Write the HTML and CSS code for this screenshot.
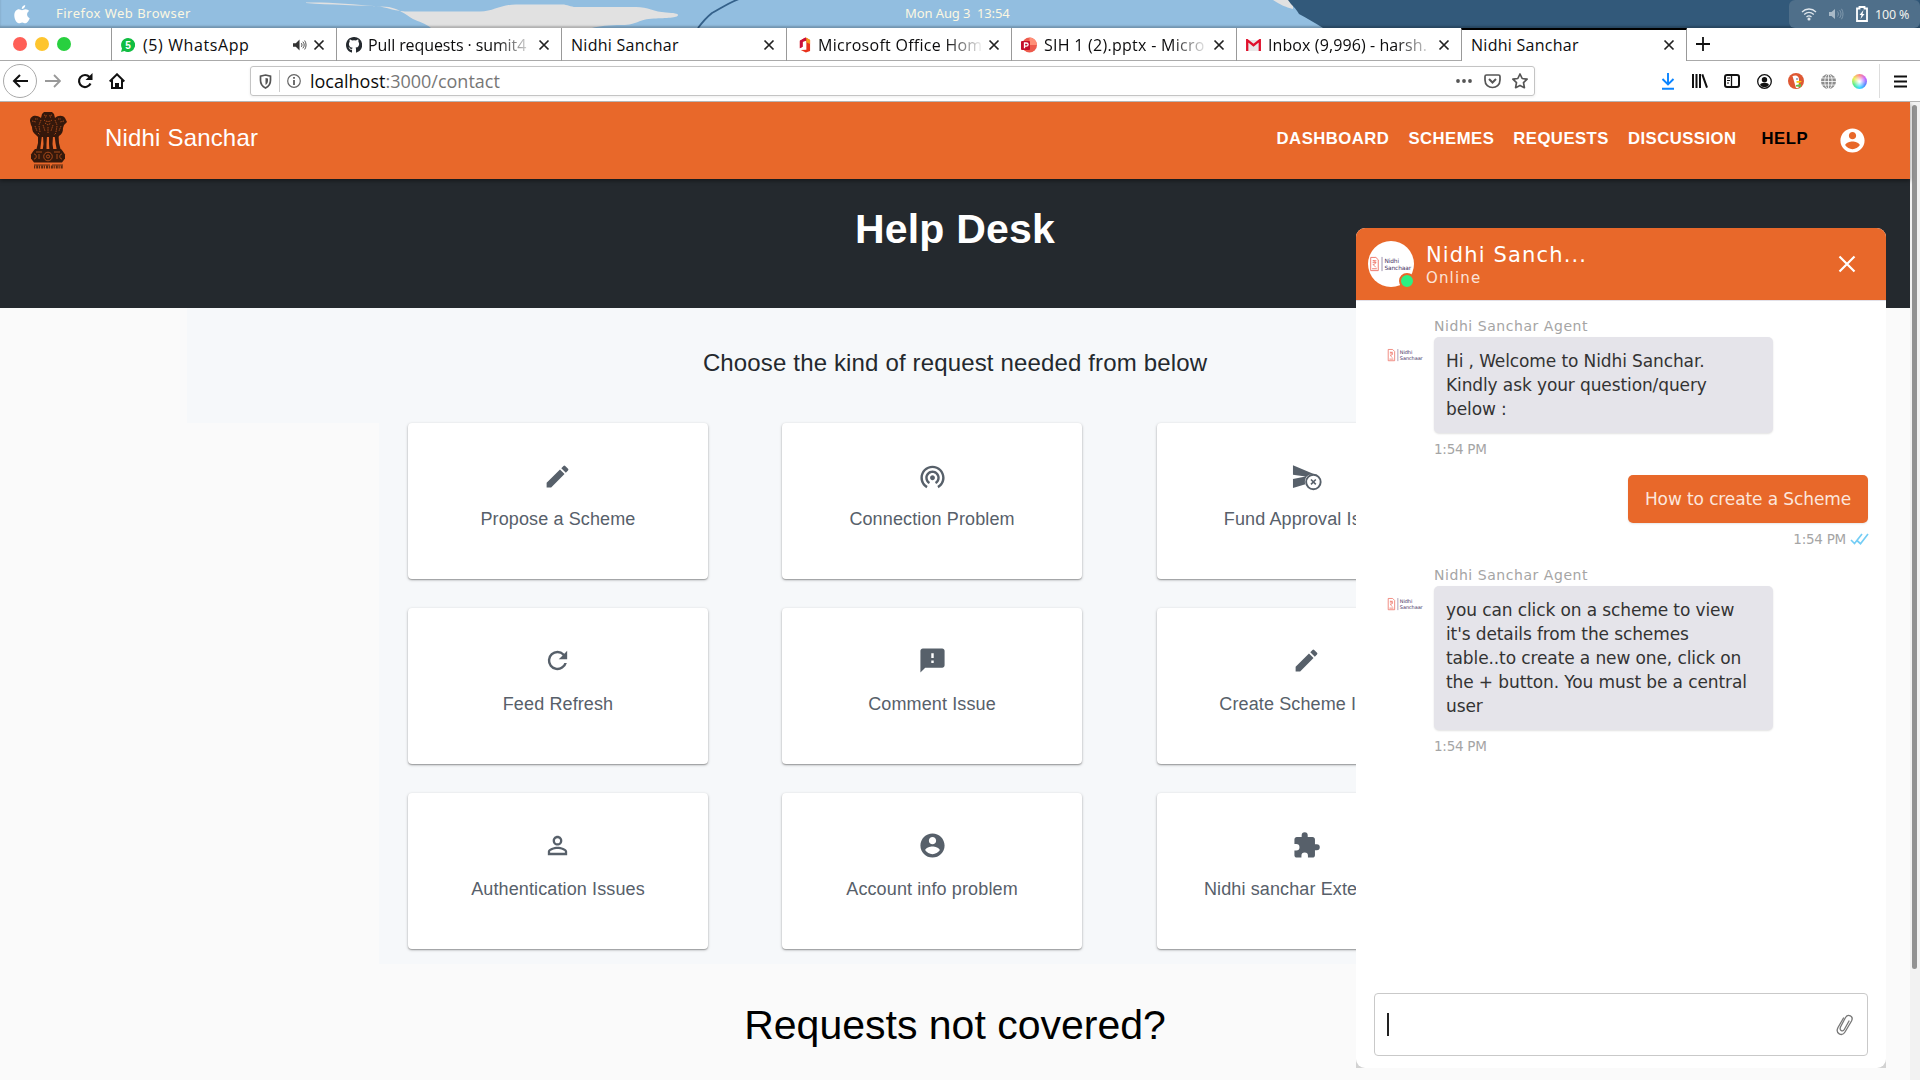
FILE: index.html
```html
<!DOCTYPE html>
<html lang="en">
<head>
<meta charset="utf-8">
<title>Nidhi Sanchar</title>
<link rel="stylesheet" href="styles.css">
</head>
<body>
<svg class="defs" width="0" height="0">
  <defs>
    <symbol id="x" viewBox="0 0 12 12"><path d="M1.5 1.5l9 9M10.500 1.500l-9 9" stroke="#222" stroke-width="1.7" fill="none"/></symbol>
    <symbol id="pencil" viewBox="0 0 24 24"><path d="M3 17.25V21h3.750L17.810 9.940l-3.750-3.750L3 17.250zM20.710 7.040a1 1 0 0 0 0-1.410l-2.340-2.340a1 1 0 0 0-1.410 0l-1.830 1.830 3.750 3.750 1.830-1.830z"/></symbol>
    <symbol id="account" viewBox="0 0 24 24"><path d="M12 2C6.480 2 2 6.480 2 12s4.480 10 10 10 10-4.480 10-10S17.520 2 12 2zm0 3c1.660 0 3 1.340 3 3s-1.340 3-3 3-3-1.340-3-3 1.340-3 3-3zm0 14.200c-2.500 0-4.710-1.280-6-3.220.030-1.990 4-3.080 6-3.080 1.990 0 5.970 1.090 6 3.080-1.290 1.940-3.500 3.220-6 3.220z"/></symbol>
    <symbol id="brand" viewBox="0 0 46 18">
      <path d="M1.500 1.500h5.500l2.500 2.500v11.500h-8z M3 13.500h5" fill="none" stroke="#ee7468" stroke-width="1"/>
      <path d="M3.500 5h4M3.500 7h4M4 5c3.500 0 3.500 4 0 4l3 3" fill="none" stroke="#ee7468" stroke-width=".9"/>
      <path d="M13.500 1v15" stroke="#6b5a84" stroke-width=".7"/>
      <text x="16" y="7.500" class="brand-word">Nidhi</text>
      <text x="16" y="14.500" class="brand-word">Sanchaar</text>
    </symbol>
  </defs>
</svg>

<header class="system-bar">
  <svg class="wallpaper" width="1920" height="28" viewBox="0 0 1920 28">
    <rect width="1920" height="28" fill="#92bee0"/>
    <path d="M306 2.500C330 2 350 4 380 6.500 392 9 396 11.500 410 11.500h70c14 0 20-7 36-7h46c6 0 8 2.500 14 2.500h60c12 0 18 5 30 5.500 8 .5 12 1 12 2.500 0 3-12 3-24 3.500-16 .5-16 6.500-32 6.500-14 0-22 1-30 3H431c-6-5-12-6-18-9-8-5-14-10-24-12-30-2-60-2-83-4z" fill="#e1e1e1"/>
    <path d="M698 28c6-8 9-11 14-15 8-4 14-9 27-14" fill="none" stroke="#34618a" stroke-width="1.800"/>
    <path d="M1273 0h20v9c-8-2-12-4-20-9z" fill="#e1e1e1"/>
    <path d="M1288 0c4 6 8 8 11 14 8 4 16 9 24 14h597V0z" fill="#32597a"/>
  </svg>
  <svg class="apple" width="16" height="19" viewBox="0 0 16 19" fill="#fff"><path d="M11.200 0c.2 2-1.500 4-3.500 4 0-2 1.500-3.700 3.500-4zM8 5.200c1 0 2-1 3.600-1 1.500 0 2.700.7 3.500 1.800-3 1.800-2.500 6 .6 7.200-.8 2.300-2.400 5-4.200 5-1.300 0-1.800-.8-3.300-.8s-2 .8-3.300.8C2.500 18.200.3 14 .3 10.500.3 6.500 2.600 4.300 4.900 4.300c1.300 0 2.300.9 3.100.9z"/></svg>
  <span class="app-name">Firefox Web Browser</span>
  <span class="clock">Mon Aug 3&nbsp; 13:54</span>
  <div class="tray">
    <svg width="16" height="14" viewBox="0 0 16 14" fill="none" stroke="#dfe6ec" stroke-width="1.300"><path d="M1 5c4-4 10-4 14 0M3.200 7.500c3-2.700 6.600-2.700 9.600 0M5.500 10c1.600-1.400 3.400-1.400 5 0"/><circle cx="8" cy="12" r=".9" fill="#dfe6ec"/></svg>
    <svg width="15" height="12" viewBox="0 0 15 12" fill="#a9bac8"><path d="M0 4h2.500L6 1v10L2.500 8H0z"/><path d="M8.500 3.500c1.200 1.500 1.200 3.500 0 5M10.500 2c2 2.500 2 5.500 0 8M12.500 .8c2 3 2 7.400 0 10.400" fill="none" stroke="#8099ad"/></svg>
    <svg width="12" height="16" viewBox="0 0 12 16" fill="none"><path d="M1 2.500h2.500V1h5v1.500H11V15H1z" stroke="#fff" stroke-width="1.800"/><path d="M7.500 4L3.500 9h2l-1 4 4-5h-2z" fill="#fff"/></svg>
    <span>100 %</span>
  </div>
</header>

<nav class="tabs">
  <div class="lights"><i class="red"></i><i class="yellow"></i><i class="green"></i></div>
  <div class="tab">
    <svg width="14" height="14" viewBox="0 0 14 14"><path d="M7 0a7 7 0 1 1-3.500 13L0 14l1-3.500A7 7 0 0 1 7 0z" fill="#11bd42"/><text x="7" y="10.800" class="badge">5</text></svg>
    <span class="tab-title wa">(5) WhatsApp</span>
    <svg class="audio" width="14" height="12" viewBox="0 0 15 12"><path d="M0 4h3l4-4v12L3 8H0z" fill="#333"/><path d="M9 4c.8 1 .8 3 0 4M10.500 2.500c2 2 2 5 0 7M12.500 1.200c2 3 2 6.600 0 9.600" fill="none" stroke="#444"/></svg>
    <svg class="close" width="12" height="12"><use href="#x"/></svg>
  </div>
  <div class="tab">
    <svg class="octo" width="16" height="16" viewBox="0 0 16 16"><path d="M8 0C3.580 0 0 3.580 0 8c0 3.540 2.290 6.530 5.470 7.590.4.070.550-.170.550-.380v-2.500c-2 .4-2.500-.9-2.700-1.300-.2-.6-.7-1-.9-1.200 1.500-.2 1.500 1.400 2.400 1.700.6.200 1 0 1.300-.1.100-.5.300-.8.500-1-2-.3-3.700-1-3.700-4 0-.9.300-1.600.8-2.100-.1-.2-.4-1 .1-2.100 0 0 .7-.2 2.200.8a7.700 7.700 0 0 1 4 0c1.500-1 2.200-.8 2.200-.8.4 1.100.2 1.900.1 2.100.5.600.8 1.300.8 2.100 0 3-1.800 3.700-3.600 4 .3.200.5.700.5 1.500v2.900c0 .2.200.5.6.4A8 8 0 0 0 8 0z" fill="#24292e"/></svg>
    <span class="tab-title fade tight">Pull requests · sumit4</span>
    <svg class="close" width="12" height="12"><use href="#x"/></svg>
  </div>
  <div class="tab">
    <span class="tab-title">Nidhi Sanchar</span>
    <svg class="close" width="12" height="12"><use href="#x"/></svg>
  </div>
  <div class="tab">
    <svg class="office" width="13" height="16" viewBox="0 0 14 16"><path d="M8 0L2 3.500v8L5 10V4.500l4-1V13l-6 .5L8.500 16l4.500-1.500v-12z" fill="#e8321c"/><path d="M8 0L2 3.500v8L5 10V4.500L9.500 3z" fill="#c8103e"/><path d="M9 0l4 2.500V7L9 5z" fill="#f59a1b"/></svg>
    <span class="tab-title fade">Microsoft Office Hom</span>
    <svg class="close" width="12" height="12"><use href="#x"/></svg>
  </div>
  <div class="tab">
    <svg class="ppt" width="16" height="16" viewBox="0 0 16 16"><circle cx="8.500" cy="8" r="7.500" fill="#ed5a4c"/><path d="M8.500.5A7.500 7.500 0 0 1 16 8H8.500z" fill="#ff8f77"/><rect y="4" width="9" height="9" rx="1" fill="#c40f2b"/><path d="M3.500 11.200V6h1.700c2.600 0 2.600 3.200 0 3.200H3.500" fill="none" stroke="#fff" stroke-width="1.300"/></svg>
    <span class="tab-title fade">SIH 1 (2).pptx - Micro</span>
    <svg class="close" width="12" height="12"><use href="#x"/></svg>
  </div>
  <div class="tab">
    <svg width="15" height="12" viewBox="0 0 15 12"><path d="M1 1h13v11H1z" fill="#e9e9e9"/><path d="M1.200 12V1.200l6.300 5 6.300-5V12" fill="none" stroke="#e0102c" stroke-width="2.300"/></svg>
    <span class="tab-title fade inbox">Inbox (9,996) - harsh.</span>
    <svg class="close" width="12" height="12"><use href="#x"/></svg>
  </div>
  <div class="tab active">
    <span class="tab-title">Nidhi Sanchar</span>
    <svg class="close" width="12" height="12"><use href="#x"/></svg>
  </div>
  <div class="new-tab"><svg width="14" height="14" viewBox="0 0 14 14"><path d="M7 0v14M0 7h14" stroke="#111" stroke-width="1.800"/></svg></div>
</nav>

<div class="toolbar">
  <div class="nav-buttons">
    <span class="back"><svg width="16" height="14" viewBox="0 0 16 14" fill="none" stroke="#111" stroke-width="2"><path d="M16 7H2M8 1L2 7l6 6"/></svg></span>
    <svg width="16" height="14" viewBox="0 0 16 14" fill="none" stroke="#999" stroke-width="1.800"><path d="M0 7h14.500M9 1l6 6-6 6"/></svg>
    <svg width="16" height="16" viewBox="0 0 16 16"><path d="M13.500 10.500A6 6 0 1 1 12.500 4" fill="none" stroke="#111" stroke-width="2.200"/><path d="M15.500 0v7h-7z" fill="#111"/></svg>
    <svg width="16" height="16" viewBox="0 0 16 16"><path d="M.7 8.500L8 1.300l7.300 7.200M3 7v8h10V7M8 15v-4" fill="none" stroke="#111" stroke-width="2"/><path d="M6 10h4v6H6z" fill="#111"/></svg>
  </div>
  <div class="url-bar">
    <svg width="13" height="15" viewBox="0 0 13 15"><path d="M6.500 1l5 1.200v4c0 4-2 6.300-5 7.800-3-1.500-5-3.800-5-7.800v-4z" fill="none" stroke="#555" stroke-width="1.700"/><path d="M6.500 4L9 4.500v2c0 2-1 3.500-2.500 4.500z" fill="#555"/></svg>
    <i class="divider"></i>
    <svg width="14" height="14" viewBox="0 0 14 14"><circle cx="7" cy="7" r="6.300" fill="none" stroke="#666" stroke-width="1.200"/><path d="M7 6v5M7 3v1.700" stroke="#555" stroke-width="1.700"/></svg>
    <span class="url">localhost<span>:3000/contact</span></span>
    <div class="url-actions">
      <svg width="16" height="4" viewBox="0 0 16 4" fill="#555"><circle cx="2" cy="2" r="1.900"/><circle cx="8" cy="2" r="1.900"/><circle cx="14" cy="2" r="1.900"/></svg>
      <svg width="17" height="15" viewBox="0 0 17 15" fill="none" stroke="#555" stroke-width="1.700"><path d="M2.500 1h12c1 0 1.500.5 1.500 1.500V6c0 10-15 10-15 0V2.500C1 1.500 1.500 1 2.500 1z"/><path d="M5 5l3.500 3.500L12 5" stroke-width="2"/></svg>
      <svg width="16" height="16" viewBox="0 0 16 16" fill="none" stroke="#555" stroke-width="1.700" stroke-linejoin="round"><path d="M8 1l2.200 4.500 4.900.7-3.600 3.500.9 5L8 12.400l-4.400 2.300.9-5L.9 6.200l4.900-.7z"/></svg>
    </div>
  </div>
  <div class="extensions">
    <svg width="14" height="17" viewBox="0 0 14 17" fill="none" stroke="#0a84ff" stroke-width="1.900"><path d="M7 0v11M1.500 6L7 11.500 12.500 6M1 15.800h12"/></svg>
    <svg width="16" height="14" viewBox="0 0 16 14" stroke="#111" stroke-width="2"><path d="M1 0v14M4.500 0v14M8 0v14M10.300.3L15 13.700"/></svg>
    <svg width="16" height="14" viewBox="0 0 16 14" fill="none" stroke="#111" stroke-width="2"><rect x="1" y="1" width="14" height="12" rx="2"/><path d="M7.500 1v12" stroke-width="1.300"/><path d="M3 4h3M3 6.500h3M3 9h2" stroke-width="1"/></svg>
    <svg width="15" height="15" viewBox="0 0 15 15"><circle cx="7.500" cy="7.500" r="6.800" fill="none" stroke="#111" stroke-width="1.300"/><circle cx="7.500" cy="5.800" r="2.700" fill="#111"/><path d="M3 11c.8-2 2-2 4.500-2s3.700 0 4.500 2c-2.500 3-6.500 3-9 0z" fill="#111"/></svg>
    <svg width="16" height="16" viewBox="0 0 16 16"><circle cx="8" cy="8" r="8" fill="#de5833"/><path d="M4.500 3c4-1.500 6.500 0 6.500 4l-.5 8H8z" fill="#fff"/><path d="M8.500 8h5c.5 1-2 2-5 1.800z" fill="#fdd20a"/><path d="M8 12l5-1v3l-5-.5z" fill="#65bc46"/><circle cx="9" cy="6" r=".8" fill="#2d4f8e"/></svg>
    <svg width="15" height="15" viewBox="0 0 15 15" fill="none" stroke="#fff" stroke-width=".8"><circle cx="7.500" cy="7.500" r="7.500" fill="#8c8c8c" stroke="none"/><path d="M0 7.500h15M7.500 0v15M1 4h13M1 11h13"/><ellipse cx="7.500" cy="7.500" rx="3.700" ry="7.500"/></svg>
    <i class="color-wheel"></i>
    <i class="divider"></i>
    <svg width="13" height="13" viewBox="0 0 13 13" stroke="#111" stroke-width="2.200"><path d="M0 1.500h13M0 6.500h13M0 11.500h13"/></svg>
  </div>
</div>

<div class="viewport">
  <main class="page">
    <header class="app-bar">
      <svg class="emblem" width="38" height="58" viewBox="0 0 38 58">
        <g fill="#35180b">
          <path d="M13 3l2-2h8l2 2 1 4c3-3 8-3 10 0l2 4-3 3-1 3c0 4-1 6-4 8l-1 1H9l-2-2c-3-2-4-5-4-8l-1-2-1-4c0-5 6-7 11-3z"/>
          <path d="M9 24h4l-1 8-1 8H7l2-8zM14 25h4l-.5 8v7h-4l1-7zM20 25h4l-.5 8 1 7h-4l-.5-7zM25.500 24h4l.5 8 2 8h-4l-1.500-8z"/>
          <path d="M6 38h26l2 2.500 2 3v4l-3 4H5l-3-4v-4l2-3z"/>
        </g>
        <g stroke="#c9581f" fill="none" stroke-width=".75">
          <path d="M15 4l3 1M23 4l-3 1M15 9c2 2 6 2 8 0M3 10l4 1M35 10l-4 1M12 9l-2 5M26 9l2 5M16 12l3 2 3-2M6 15l2 5M10 15l1 6M14 14l2 6M19 16v6M24 14l-2 6M28 15l-1 6M32 15l-2 5M9 22l2 2M27 22l-2 2M16 6h1M21 6h1M6 8h3M29 8h3" stroke-dasharray="1.500 .8"/>
          <path d="M5 43c3 0 3 5 0 5M33 43c-3 0-3 5 0 5M10 43v5M28 43v5M7 41h6M25 41h6"/>
          <circle cx="19" cy="45.500" r="4.300"/><circle cx="19" cy="45.500" r="1.600"/>
        </g>
        <path d="M5 54h29" stroke="#4f2410" stroke-width=".9" stroke-dasharray="16 2 12"/><path d="M5 56h29" stroke="#5b2a10" stroke-width="2.800" stroke-dasharray="1.200 1 2 .7"/>
      </svg>
      <span class="app-title">Nidhi Sanchar</span>
      <nav class="menu">
        <a>DASHBOARD</a><a>SCHEMES</a><a>REQUESTS</a><a>DISCUSSION</a><a class="current">HELP</a>
        <svg width="29" height="29" fill="#fff"><use href="#account"/></svg>
      </nav>
    </header>
    <section class="hero"><h1>Help Desk</h1></section>
    <section class="intro">Choose the kind of request needed from below</section>
    <section class="cards">
      <article class="card"><svg><use href="#pencil"/></svg><span>Propose a Scheme</span></article>
      <article class="card"><svg viewBox="0 0 24 24"><path d="M12 11c-1.100 0-2 .9-2 2s.9 2 2 2 2-.9 2-2-.9-2-2-2zm6 2c0-3.310-2.690-6-6-6s-6 2.690-6 6c0 2.220 1.210 4.150 3 5.190l1-1.740c-1.190-.7-2-1.970-2-3.450 0-2.210 1.790-4 4-4s4 1.790 4 4c0 1.480-.81 2.750-2 3.450l1 1.740c1.790-1.040 3-2.970 3-5.190zM12 3C6.480 3 2 7.480 2 13c0 3.700 2.010 6.920 4.990 8.650l1-1.730C5.610 18.530 4 15.960 4 13c0-4.420 3.580-8 8-8s8 3.580 8 8c0 2.960-1.610 5.530-4 6.920l1 1.730c2.990-1.730 5-4.950 5-8.650 0-5.520-4.480-10-10-10z"/></svg><span>Connection Problem</span></article>
      <article class="card"><svg viewBox="0 0 24 24"><path d="M.8 2.700L18 10c-3.700-.2-6.500 1.600-7.300 5.500-.1 1.200 0 2.300.4 3L.8 21.500V14l10.500-2L.8 10.500z"/><circle cx="17.700" cy="16.500" r="6" fill="none" stroke="#57606a" stroke-width="1.600"/><path d="M15.700 14.500l4 4m0-4l-4 4" stroke="#57606a" stroke-width="1.300"/></svg><span>Fund Approval Issue</span></article>
      <article class="card"><svg viewBox="0 0 24 24"><path d="M17.650 6.350A7.960 7.960 0 0 0 12 4a8 8 0 1 0 7.730 10h-2.080A6 6 0 1 1 12 6c1.660 0 3.140.69 4.220 1.780L13 11h7V4l-2.350 2.350z"/></svg><span>Feed Refresh</span></article>
      <article class="card"><svg viewBox="0 0 24 24"><path d="M20 2H4c-1.100 0-1.990.9-1.990 2L2 22l4-4h14c1.100 0 2-.9 2-2V4c0-1.100-.9-2-2-2zm-7 12h-2v-2h2v2zm0-4h-2V6h2v4z"/></svg><span>Comment Issue</span></article>
      <article class="card"><svg><use href="#pencil"/></svg><span>Create Scheme Issue</span></article>
      <article class="card"><svg viewBox="0 0 24 24"><path d="M12 5.900a2.100 2.100 0 1 1 0 4.200 2.100 2.100 0 0 1 0-4.200m0 9c2.970 0 6.100 1.460 6.100 2.100v1.100H5.900V17c0-.64 3.130-2.100 6.100-2.100M12 4C9.790 4 8 5.790 8 8s1.790 4 4 4 4-1.790 4-4-1.790-4-4-4zm0 9c-2.670 0-8 1.340-8 4v3h16v-3c0-2.660-5.330-4-8-4z"/></svg><span>Authentication Issues</span></article>
      <article class="card"><svg><use href="#account"/></svg><span>Account info problem</span></article>
      <article class="card"><svg viewBox="0 0 24 24"><path d="M20.500 11H19V7c0-1.100-.9-2-2-2h-4V3.500a2.500 2.500 0 0 0-5 0V5H4c-1.100 0-1.990.9-1.990 2v3.800H3.500a2.700 2.700 0 0 1 0 5.400H2V20c0 1.100.9 2 2 2h3.800v-1.500a2.700 2.700 0 0 1 5.400 0V22H17c1.100 0 2-.9 2-2v-4h1.500a2.500 2.500 0 0 0 0-5z"/></svg><span>Nidhi sanchar Extensions</span></article>
    </section>
    <h2>Requests not covered?</h2>
  </main>
  <div class="scrollbar"><i></i></div>

  <aside class="chat">
    <div class="chat-window">
      <header class="chat-header">
        <div class="avatar"><svg width="44" height="17"><use href="#brand"/></svg><i class="online"></i></div>
        <div class="who"><strong>Nidhi Sanch...</strong><span>Online</span></div>
        <svg class="dismiss" width="18" height="18" viewBox="0 0 18 18"><path d="M1.500 1.500l15 15M16.500 1.500l-15 15" stroke="#fff" stroke-width="2.200"/></svg>
      </header>
      <div class="thread">
        <div class="from">Nidhi Sanchar Agent</div>
        <div class="row">
          <svg class="mini" width="37" height="15"><use href="#brand"/></svg>
          <p class="bubble">Hi , Welcome to Nidhi Sanchar.<br>Kindly ask your question/query<br>below :</p>
        </div>
        <time>1:54 PM</time>
        <p class="mine">How to create a Scheme</p>
        <time class="sent">1:54 PM <svg width="19" height="12" viewBox="0 0 19 12" fill="none" stroke="#74cdf5" stroke-width="1.700"><path d="M1 7l3.500 3.500L12 1M7.500 8l3 2.700L18 1"/></svg></time>
        <div class="from">Nidhi Sanchar Agent</div>
        <div class="row">
          <svg class="mini" width="37" height="15"><use href="#brand"/></svg>
          <p class="bubble">you can click on a scheme to view<br>it's details from the schemes<br>table..to create a new one, click on<br>the + button. You must be a central<br>user</p>
        </div>
        <time>1:54 PM</time>
      </div>
      <div class="composer">
        <i class="caret"></i>
        <svg width="18" height="22" viewBox="0 0 18 21" fill="none" stroke="#777" stroke-width="1.300" stroke-linecap="round"><path d="M7.500 3.500L2 13c-3 6 4 9.500 7 4.500l6.500-11c2.500-5-3.500-7.500-6-3.500L4.500 12.500c-1.500 4 2.500 5 3.800 2.500L13 6.500"/></svg>
      </div>
    </div>
  </aside>
</div>
</body>
</html>
```
FILE: styles.css
```css
* { box-sizing: border-box; }
body {
  margin: 0;
  width: 1920px;
  height: 1080px;
  overflow: hidden;
  display: flex;
  flex-direction: column;
  background: #fafafa;
  font-family: "Liberation Sans", sans-serif;
}
svg { display: block; flex: none; }
i { display: block; flex: none; }
p, h1, h2 { margin: 0; }
.defs { position: absolute; }

/* System bar */
.system-bar {
  position: relative;
  height: 28px;
  flex: none;
  display: flex;
  align-items: center;
  padding: 0 0 2px 14px;
  color: #fdf8e2;
  font: 13px "Noto Sans", sans-serif;
  box-shadow: inset 0 -2px 2px rgba(0, 0, 0, .22);
}
.wallpaper { position: absolute; left: 0; top: 0; z-index: -1; }
.apple { margin-top: 2px; }
.app-name { margin-left: 26px; width: 849px; letter-spacing: .48px; }
.clock { letter-spacing: -.1px; }
.tray {
  margin: 0 0 -2px auto;
  width: 131px;
  height: 28px;
  border-radius: 6px;
  background: #4f6f8a;
  display: flex;
  align-items: center;
  padding-left: 12px;
  gap: 12px;
  color: #f2f2ee;
  font-size: 12.500px;
}
.tray span { margin-left: -5px; white-space: nowrap; letter-spacing: -.2px; }

/* Tab strip */
.tabs {
  height: 33px;
  flex: none;
  display: flex;
  background: #fff;
  border-bottom: 1px solid #aaa;
  font: 16px "Open Sans", "Noto Sans", sans-serif;
}
.lights { width: 111px; display: flex; align-items: center; padding-left: 13px; gap: 8px; }
.lights i { width: 14px; height: 14px; border-radius: 50%; }
.red { background: #ff5f57; }
.yellow { background: #fec52e; }
.green { background: #28d03f; }
.tab {
  width: 225px;
  height: 33px;
  flex: none;
  display: flex;
  align-items: center;
  padding: 0 11px 0 9px;
  border-left: 1px solid #999;
}
.tab > svg:first-child { margin-right: 7px; }
.tab-title { flex: 1; min-width: 0; overflow: hidden; white-space: nowrap; letter-spacing: .27px; color: #0c0c0d; }
.tab .wa { letter-spacing: .6px; margin-left: 1px; }
.tab > svg.octo { margin-right: 6px; }
.fade { mask-image: linear-gradient(90deg, #000 calc(100% - 38px), transparent 100%); }
.tab .tight { letter-spacing: -.1px; }
.tab .inbox { letter-spacing: .1px; }
.audio { margin-right: 2px; }
.close { margin-left: 4px; }
.tab.active { background: #fff; border-top: 2px solid #000; border-right: 1px solid #999; width: 226px; padding-bottom: 2px; }
.new-tab { display: flex; align-items: center; padding: 0 0 1px 9px; }
.badge { font: bold 10px "Liberation Sans", sans-serif; fill: #fff; text-anchor: middle; }
.office { margin-left: 2px; }

/* Toolbar */
.toolbar {
  height: 41px;
  flex: none;
  display: flex;
  align-items: center;
  background: #fff;
  border-bottom: 1px solid #b5b5b5;
}
.nav-buttons { width: 250px; display: flex; align-items: center; gap: 16px; padding-left: 3px; }
.back {
  width: 34px;
  height: 34px;
  margin-right: -8px;
  border: 1px solid #aaa;
  border-radius: 50%;
  display: grid;
  place-items: center;
}
.url-bar {
  width: 1285px;
  height: 30px;
  display: flex;
  align-items: center;
  padding: 0 6px 0 8px;
  border: 1px solid #c4c4c4;
  border-radius: 3px;
  box-shadow: 0 1px 3px rgba(0, 0, 0, .07);
}
.divider { width: 1px; height: 22px; background: #ccc; margin: 0 7px 0 7px; }
.url { margin-left: 9px; font: 18px "Open Sans", "Noto Sans", sans-serif; color: #0c0c0d; white-space: nowrap; }
.url span { color: #777; }
.url-actions { margin-left: auto; display: flex; align-items: center; gap: 11.500px; }
.extensions { margin-left: auto; padding-right: 13px; display: flex; align-items: center; gap: 16.500px; }
.extensions .divider { height: 34px; margin: 0 -2px 0 -5px; background: #ddd; }
.color-wheel {
  width: 15px;
  height: 15px;
  border-radius: 50%;
  background: radial-gradient(#fff 5%, transparent 60%), conic-gradient(#f88, #c6f, #58f, #3df, #5e8, #ee5, #f88);
}

/* Page */
.viewport { flex: 1; min-height: 0; display: flex; overflow: hidden; }
.page { width: 1910px; flex: none; display: flex; flex-direction: column; align-items: center; letter-spacing: .0075em; }
.app-bar {
  position: relative;
  width: 100%;
  height: 77px;
  flex: none;
  display: flex;
  align-items: center;
  padding: 0 43px 0 29px;
  background: #e8682a;
  box-shadow: 0 2px 4px rgba(0, 0, 0, .4);
}
.emblem { margin-top: -1px; }
.app-title { margin: -6px 0 0 38px; font-size: 24px; color: #fff; letter-spacing: .18px; }
.menu { margin: -4px 0 0 auto; display: flex; align-items: center; font-size: 16.700px; font-weight: bold; letter-spacing: .48px; color: #fff; }
.menu a { margin-right: 19px; }
.menu .current { color: #000; margin: 0 30px 0 6px; }
.menu svg { margin-top: 3px; }
.hero {
  width: 100%;
  height: 129px;
  flex: none;
  padding-top: 26px;
  background: #24292e;
  color: #fff;
  text-align: center;
}
.hero h1 { font-size: 41px; line-height: 48px; letter-spacing: .2px; }
.intro {
  width: 1536px;
  height: 115px;
  flex: none;
  padding-top: 40px;
  background: #f6f8fa;
  color: #24292e;
  font-size: 24px;
  line-height: 30px;
  letter-spacing: .15px;
  text-align: center;
}
.cards {
  width: 1152px;
  height: 541px;
  flex: none;
  display: grid;
  grid-template-columns: 374px 375px 300px;
  grid-auto-rows: 156px;
  row-gap: 29px;
  padding-left: 29px;
  background: #f6f8fa;
}
.card {
  width: 300px;
  display: flex;
  flex-direction: column;
  align-items: center;
  padding-top: 38px;
  border-radius: 4px;
  background: #fff;
  color: #57606a;
  font-size: 18px;
  line-height: 24px;
  box-shadow: 0 1px 1px rgba(0, 0, 0, .2), 0 1px 3px rgba(0, 0, 0, .28);
}
.card svg { width: 29px; height: 29px; margin: 0 1px 17px 0; fill: #57606a; overflow: visible; }
.card:nth-child(-n+3) svg { margin: 1px 1px 16px 0; }
.card:nth-child(3n+2) svg { margin-right: 0; }
h2 { margin-top: 37px; font-size: 41px; line-height: 48px; font-weight: normal; letter-spacing: 0; color: #000; }

.scrollbar { width: 10px; padding: 3px 3px 0 2px; background: #f2f2f2; }
.scrollbar i { width: 5px; height: 864px; border-radius: 3px; background: #929292; }

/* Chat widget */
.chat {
  position: absolute;
  left: 1356px;
  top: 228px;
  width: 530px;
  height: 840px;
  background: linear-gradient(transparent 98%, #d2d2d2 98%);
  font-family: "DejaVu Sans", sans-serif;
}
.chat-window { height: 100%; display: flex; flex-direction: column; border-radius: 9px; background: #fff; overflow: hidden; }
.chat-header {
  height: 73px;
  flex: none;
  display: flex;
  align-items: center;
  padding: 0 30px 0 12px;
  background: #e8682a;
  border-bottom: 1px solid #e3e1e8;
  color: #fff;
}
.avatar { position: relative; width: 46px; height: 46px; border-radius: 50%; background: #fff; display: grid; place-items: center; }
.online { position: absolute; right: -1px; bottom: -2px; width: 16px; height: 16px; border: 2px solid #e8682a; border-radius: 50%; background: #2def82; }
.brand-word { font: 6.200px "DejaVu Sans", sans-serif; fill: #483463; letter-spacing: -.1px; }
.who { margin: 3px 0 0 12px; display: flex; flex-direction: column; letter-spacing: 1.150px; }
.who strong { font-size: 21px; font-weight: normal; line-height: 25px; }
.who span { font-size: 15px; line-height: 20px; color: #fbe3d8; }
.dismiss { margin-left: auto; }
.thread { flex: 1; padding: 15px 18px 0 78px; font-size: 17px; line-height: 24px; letter-spacing: -.11px; }
.from { height: 21px; font-size: 14px; line-height: 20px; letter-spacing: .55px; color: #a5a5a5; }
.row { display: flex; margin-left: -47px; }
.mini { margin: 11px 10px 0 0; }
.bubble { width: 339px; padding: 12px; border-radius: 5px; background: #e5e4ea; color: #333; white-space: nowrap; box-shadow: 0 1px 2px rgba(0, 0, 0, .12); }
time { display: block; margin-top: 6px; font-size: 13.500px; line-height: 20px; letter-spacing: -.25px; color: #a5a5a5; }
.mine { width: 240px; height: 48px; margin: 16px 0 0 auto; line-height: 48px; text-align: center; color: #fce6dc; background: #e8682a; border-radius: 5px; white-space: nowrap; box-shadow: 0 1px 2px rgba(0, 0, 0, .1); }
.sent { display: flex; justify-content: flex-end; align-items: center; gap: 4px; margin-bottom: 16px; margin-right: -1px; }
.composer {
  height: 63px;
  flex: none;
  margin: 0 18px 12px;
  padding: 0 13px 0 12px;
  display: flex;
  align-items: center;
  justify-content: space-between;
  border: 1px solid #c9c9c9;
  border-radius: 4px;
}
.caret { width: 2px; height: 23px; background: #222; }
```
